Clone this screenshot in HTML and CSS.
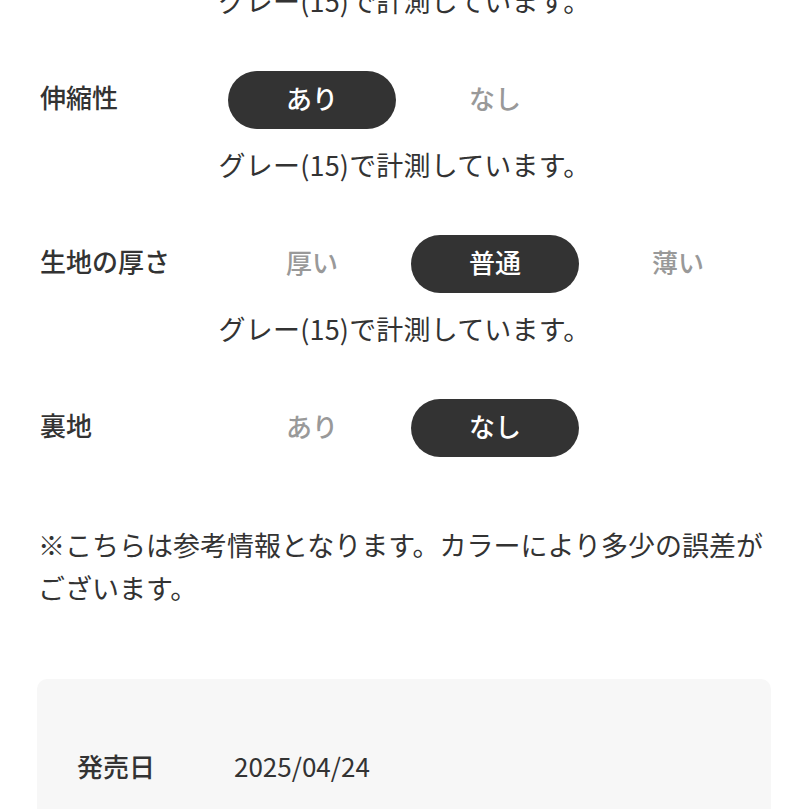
FILE: index.html
```html
<!DOCTYPE html>
<html lang="ja">
<head>
<meta charset="utf-8">
<link rel="stylesheet" href="styles.css">
</head>
<body>
<div class="page">
  <p class="note">グレー(15)で計測しています。</p>

  <div class="spec">
    <div class="spec-label">伸縮性</div>
    <div class="options">
      <span class="opt active">あり</span>
      <span class="opt">なし</span>
    </div>
  </div>
  <p class="note">グレー(15)で計測しています。</p>

  <div class="spec">
    <div class="spec-label">生地の厚さ</div>
    <div class="options">
      <span class="opt">厚い</span>
      <span class="opt active">普通</span>
      <span class="opt">薄い</span>
    </div>
  </div>
  <p class="note">グレー(15)で計測しています。</p>

  <div class="spec">
    <div class="spec-label">裏地</div>
    <div class="options">
      <span class="opt">あり</span>
      <span class="opt active">なし</span>
    </div>
  </div>

  <p class="disclaimer">※こちらは参考情報となります。カラーにより多少の誤差がございます。</p>

  <div class="info-box">
    <div class="info-row">
      <span class="info-label">発売日</span>
      <span class="info-value">2025/04/24</span>
    </div>
  </div>
</div>
</body>
</html>
```

FILE: styles.css
```css
html, body {
  margin: 0;
  padding: 0;
  background: #ffffff;
}

body {
  font-family: "Noto Sans CJK JP", "Noto Sans", sans-serif;
  color: #333333;
  overflow: hidden;
}

.page {
  padding: 0 38px;
  margin-top: -21px;
}

.note {
  margin: 0;
  font-size: 27px;
  line-height: 43px;
  text-align: center;
  color: #333333;
  letter-spacing: 0.2px;
}

.spec {
  display: flex;
  align-items: center;
  height: 58px;
  margin-top: 49px;
  margin-bottom: 14px;
}

.spec-label {
  width: 190px;
  padding-left: 2px;
  box-sizing: border-box;
  font-size: 26px;
  font-weight: 500;
  line-height: 1;
  position: relative;
  top: -3px;
}

.options {
  display: grid;
  grid-template-columns: repeat(3, 168px);
  column-gap: 15px;
}

.opt {
  display: flex;
  align-items: center;
  justify-content: center;
  height: 58px;
  box-sizing: border-box;
  padding-bottom: 5px;
  border-radius: 29px;
  font-size: 26px;
  font-weight: 500;
  line-height: 1;
  color: #999999;
}

.opt.active {
  background: #333333;
  color: #ffffff;
}

.disclaimer {
  margin: 66px 0 0;
  font-size: 27px;
  line-height: 43px;
  color: #333333;
}

.info-box {
  margin-top: 70px;
  margin-left: -1px;
  background: #f7f7f7;
  border-radius: 10px;
  padding: 64px 40px 60px;
}

.info-row {
  display: flex;
  align-items: center;
  line-height: 46px;
}

.info-label {
  width: 157px;
  font-size: 26px;
  font-weight: 500;
}

.info-value {
  font-size: 26px;
}
```
